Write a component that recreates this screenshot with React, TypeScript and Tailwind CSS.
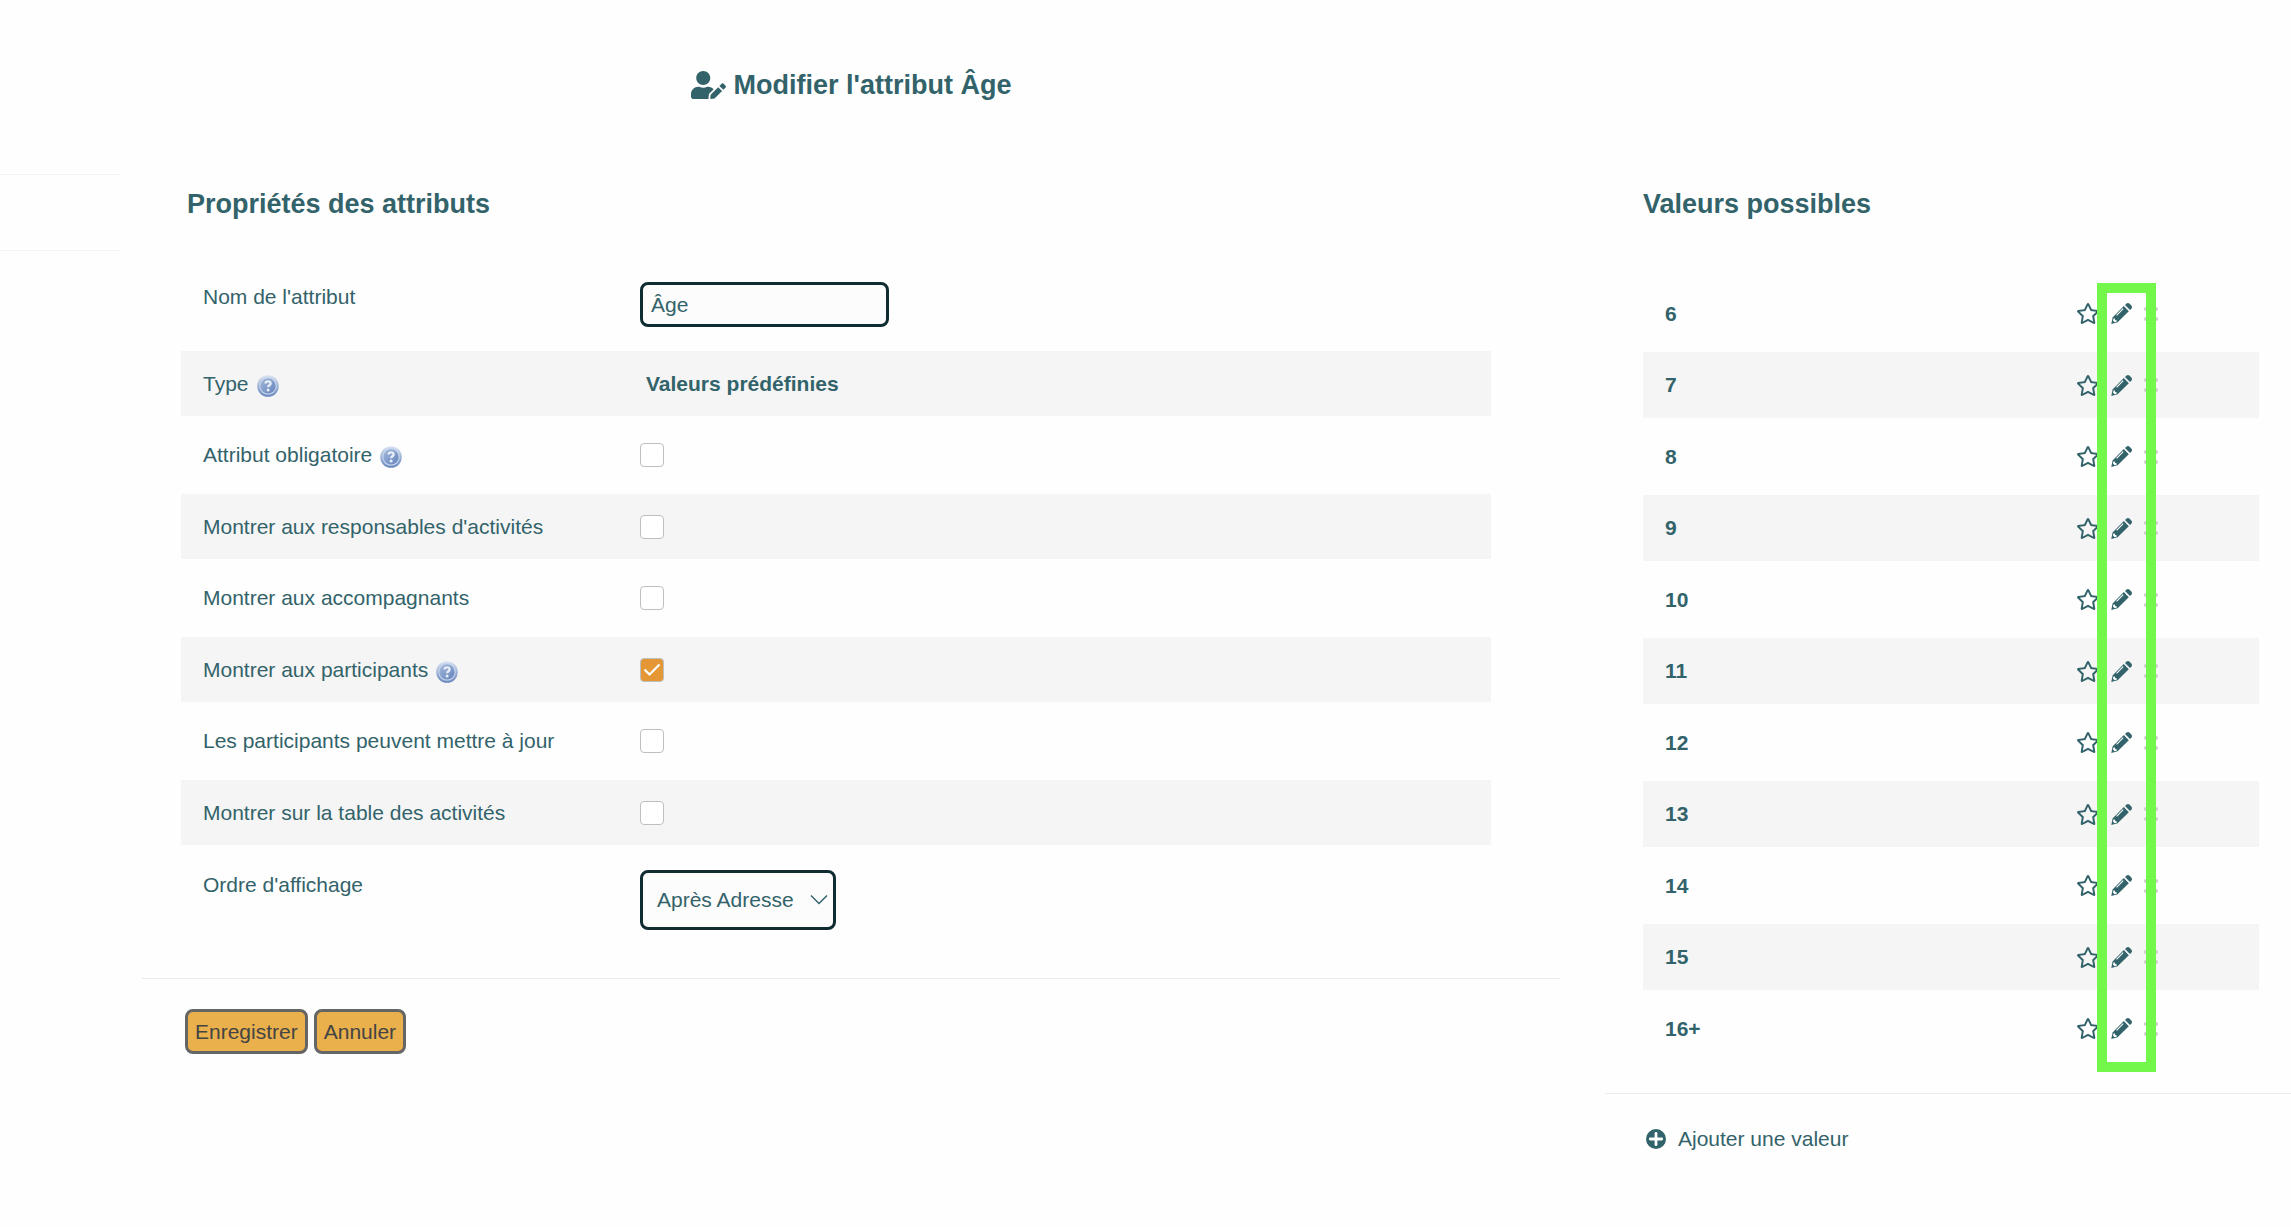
import { useState } from 'react'
import type { ReactNode } from 'react'
import { FaRegStar, FaUserEdit } from 'react-icons/fa'

type Option = {
  id: string
  label: string
  help?: boolean
  checked?: boolean
}

const OPTIONS: Option[] = [
  { id: 'mandatory', label: 'Attribut obligatoire', help: true },
  { id: 'leaders', label: "Montrer aux responsables d'activités" },
  { id: 'chaperones', label: 'Montrer aux accompagnants' },
  { id: 'participants', label: 'Montrer aux participants', help: true, checked: true },
  { id: 'update', label: 'Les participants peuvent mettre à jour' },
  { id: 'table', label: 'Montrer sur la table des activités' },
]

const VALUES = ['6', '7', '8', '9', '10', '11', '12', '13', '14', '15', '16+']

function HelpIcon() {
  return (
    <svg viewBox="0 0 22 22" className="mt-1 size-[22px] shrink-0" role="img" aria-label="Aide">
      <defs>
        <linearGradient id="help-ring" x1="0" y1="0" x2="0" y2="1">
          <stop offset="0" stopColor="#dbe4f3" />
          <stop offset="1" stopColor="#6585bd" />
        </linearGradient>
        <linearGradient id="help-disc" x1="0" y1="0" x2="1" y2="1">
          <stop offset="0" stopColor="#a3b9dc" />
          <stop offset="1" stopColor="#6482bb" />
        </linearGradient>
      </defs>
      <circle cx="11" cy="11" r="10.8" fill="url(#help-ring)" />
      <circle cx="11" cy="11" r="8.8" fill="#c3d1e9" />
      <circle cx="11" cy="11" r="7.6" fill="url(#help-disc)" />
      <path d="M8.6 8.6c0-3 5-3 5 0 0 1.7-2.4 1.7-2.4 3.6" fill="none" stroke="#e6edf8" strokeWidth="2.4" />
      <circle cx="11.1" cy="15" r="1.5" fill="#e6edf8" />
    </svg>
  )
}

function PencilIcon() {
  return (
    <svg viewBox="0 0 21 21" className="size-[21px]" aria-hidden="true">
      <path fill="currentColor" d="M14 2l1.3-1.2q1.7-1.4 3.3 0l1.7 1.8q1.4 1.6 0 3.2L19 7.1z" />
      <path fill="currentColor" d="M12.8 3.1l5 5.1L6.6 19.3.3 20.9l1.3-6.5z" />
      <path fill="none" stroke="#fefefe" strokeWidth="1.1" d="M5.6 12.3l6.6-6.6" />
      <path fill="#fefefe" d="M2.5 15.4l1.4.2.3 1.5 1.6.3.1 1.2-2.3.7-1.7-1.7z" />
    </svg>
  )
}

function PlusCircleIcon() {
  return (
    <svg viewBox="0 0 20 20" className="size-5" aria-hidden="true">
      <circle cx="10" cy="10" r="10" fill="currentColor" />
      <path d="M10 4.3v11.4M4.3 10h11.4" fill="none" stroke="#fefefe" strokeWidth="2.8" strokeLinecap="round" />
    </svg>
  )
}

function DragHandle() {
  return (
    <svg viewBox="0 0 14 14" className="size-3.5" fill="#cbcbcb" aria-hidden="true">
      {[2, 12].map((y) => (
        <g key={y}>
          <circle cx="2" cy={y} r="2" />
          <circle cx="7" cy={y} r="2" />
          <circle cx="12" cy={y} r="2" />
        </g>
      ))}
    </svg>
  )
}

function Checkbox({ id, initial }: { id: string; initial: boolean }) {
  const [checked, setChecked] = useState(initial)

  return (
    <span className="relative flex size-6">
      <input
        id={id}
        type="checkbox"
        checked={checked}
        onChange={(e) => setChecked(e.target.checked)}
        className="size-6 appearance-none rounded border border-[#bcc0c2] bg-white checked:bg-[#e69735]"
      />
      {checked && (
        <svg viewBox="0 0 24 24" className="pointer-events-none absolute inset-0 size-6" fill="none" stroke="white" strokeWidth="2.2">
          <path d="M4.5 11.5l5 5L19.5 6.5" />
        </svg>
      )}
    </span>
  )
}

type FieldProps = {
  id: string
  label: string
  help?: boolean
  children: ReactNode
}

function Field({ id, label, help, children }: FieldProps) {
  return (
    <div className="grid h-[78px] grid-cols-[437px_1fr] items-center px-[22px] even:h-[65px] even:bg-[#f5f5f5]">
      <div className="flex items-center gap-2">
        <label htmlFor={id}>{label}</label>
        {help && <HelpIcon />}
      </div>
      {children}
    </div>
  )
}

export default function App() {
  const [name, setName] = useState('Âge')

  return (
    <div className="grid min-h-screen grid-cols-[120px_minmax(0,1440fr)_minmax(0,731fr)] bg-[#fefefe] font-['Helvetica','Liberation_Sans',Arial,sans-serif] text-[21px] leading-6 text-[#33636a]">
      <div className="pt-[174px]">
        <div className="h-[77px] border-y border-[#f3f3f3]" />
      </div>

      <main className="ml-[22px]">
        <h1 className="flex items-center justify-center gap-2 pt-[69px] text-[27px] leading-8 font-bold">
          <FaUserEdit className="h-7 w-[35px]" />
          Modifier l'attribut Âge
        </h1>

        <form onSubmit={(e) => e.preventDefault()}>
          <h2 className="mt-[87px] ml-[45px] text-[27px] leading-8 font-bold">Propriétés des attributs</h2>

          <div className="mt-[53px] mr-[69px] ml-[39px]">
            <div className="grid h-[78px] grid-cols-[437px_1fr] items-start px-[22px] pt-[9px]">
              <label htmlFor="name" className="pt-[3px]">Nom de l'attribut</label>
              <input
                id="name"
                type="text"
                value={name}
                onChange={(e) => setName(e.target.value)}
                className="h-[45px] w-[249px] rounded-lg border-3 border-[#0f2c33] bg-[#fcfcfc] px-2"
              />
            </div>

            <Field id="type" label="Type" help>
              <output id="type" className="pl-1.5 font-bold">Valeurs prédéfinies</output>
            </Field>

            {OPTIONS.map((o) => (
              <Field key={o.id} id={o.id} label={o.label} help={o.help}>
                <Checkbox id={o.id} initial={o.checked ?? false} />
              </Field>
            ))}

            <div className="grid grid-cols-[437px_1fr] items-start px-[22px] pt-[25px]">
              <label htmlFor="order" className="pt-[3px]">Ordre d'affichage</label>
              <div className="relative w-[196px]">
                <select
                  id="order"
                  className="h-[60px] w-full appearance-none rounded-lg border-3 border-[#0f2c33] bg-[#fcfcfc] px-3.5"
                >
                  <option>Après Adresse</option>
                </select>
                <svg
                  viewBox="0 0 18 12"
                  className="pointer-events-none absolute top-6 right-2 h-3 w-[18px]"
                  fill="none"
                  stroke="#33636a"
                  strokeWidth="1.5"
                >
                  <path d="M1 1.5l8 8 8-8" />
                </svg>
              </div>
            </div>
          </div>

          <div className="mt-12 flex gap-1.5 border-t border-[#ebebeb] pt-[30px] pl-[43px] text-[#444]">
            <button type="submit" className="h-[45px] rounded-lg border-3 border-[#656565] bg-[#e9b04c] px-[7px]">
              Enregistrer
            </button>
            <button type="button" className="h-[45px] rounded-lg border-3 border-[#656565] bg-[#e9b04c] px-[7px]">
              Annuler
            </button>
          </div>
        </form>
      </main>

      <aside className="ml-[45px] pt-[188px]">
        <h2 className="ml-[38px] text-[27px] leading-8 font-bold">Valeurs possibles</h2>

        <div className="relative mt-[55px] mr-8 ml-[38px]">
          <ul>
            {VALUES.map((v) => (
              <li key={v} className="flex h-[77px] items-center pr-[101px] pl-[22px] even:h-[66px] even:bg-[#f5f5f5]">
                <span className="flex-1 font-bold">{v}</span>
                <button type="button" aria-label={`Valeur par défaut ${v}`}>
                  <FaRegStar className="h-[21px] w-6" />
                </button>
                <button type="button" aria-label={`Modifier ${v}`} className="mr-3 ml-[11px]">
                  <PencilIcon />
                </button>
                <DragHandle />
              </li>
            ))}
          </ul>
          {/* highlight around the edit column */}
          <div className="pointer-events-none absolute top-2 right-[103px] -bottom-[5px] w-[59px] border-10 border-[#74f74b]" />
        </div>

        <div className="mt-[26px] border-t border-[#ebebeb] pt-[33px] pl-[41px]">
          <a href="#ajouter" className="inline-flex items-center gap-3">
            <PlusCircleIcon />
            Ajouter une valeur
          </a>
        </div>
      </aside>
    </div>
  )
}
